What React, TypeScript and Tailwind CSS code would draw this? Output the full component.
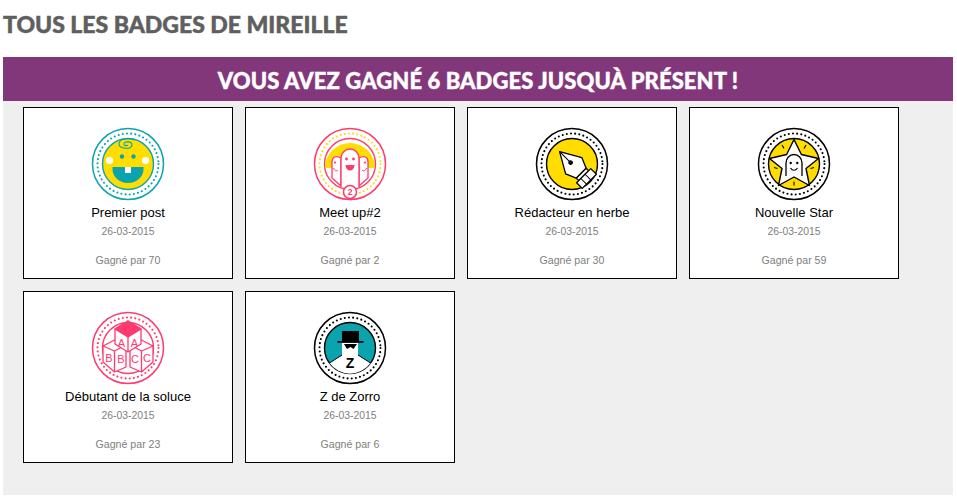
import React from "react";

const TEAL = "#0ba3ad";
const PINK = "#ff3a6e";
const YEL = "#ffdd00";

function Ring({ stroke, dot, inner, children }: { stroke: string; dot: string; inner: string; children?: React.ReactNode }) {
  return (
    <svg width="74" height="74" viewBox="-37 -37 74 74" className="block">
      <circle r="35.5" fill="#fff" stroke={stroke} strokeWidth="1.5" />
      <circle r="30.5" fill="none" stroke={dot} strokeWidth="2.1" strokeLinecap="round" strokeDasharray="0 4.19" />
      <circle r="25.5" fill={inner} stroke={stroke} strokeWidth="1.4" />
      {children}
    </svg>
  );
}

const Baby = () => (
  <Ring stroke={TEAL} dot={TEAL} inner={YEL}>
    <circle cx="-6" cy="-7.5" r="2.2" fill={TEAL} />
    <circle cx="5.5" cy="-7.5" r="2.2" fill={TEAL} />
    <circle cx="-18.5" cy="-3.5" r="3.6" fill="#fff" />
    <circle cx="17.5" cy="-3.5" r="3.6" fill="#fff" />
    <path d="M-15.5 3H15.5V5A15.5 14 0 0 1-15.5 5Z" fill={TEAL} />
    <rect x="-3" y="3" width="6" height="6" fill="#fff" />
    <path d="M6-24C2-26-9-26-9-20C-9-15 4-14 4-19C4-23-4-23-4-20C-4-18-1-18 0-19" fill="none" stroke={TEAL} strokeWidth="1.1" />
  </Ring>
);

const Meet = () => (
  <Ring stroke={PINK} dot={YEL} inner="#fff">
    <path d="M-25 4A25 25 0 0 1 25 4Z" fill={YEL} />
    <path d="M-9-6c-5-3-9-1-9 4V14L-9 22Z M9-6c5-3 9-1 9 4V14L9 22Z" fill="#fff" stroke={PINK} strokeWidth="1.3" strokeLinejoin="round" />
    <circle cx="-15" cy="-1.5" r="1.1" fill={PINK} />
    <circle cx="15" cy="-1.5" r="1.1" fill={PINK} />
    <path d="M-16.5 4c1 3 3 3.5 4.5 2 M16.5 4c-1 3-3 3.5-4.5 2" fill="none" stroke={PINK} strokeWidth="1" />
    <path d="M-9 23V-6a9 9 0 0 1 18 0V23" fill="#fff" stroke={PINK} strokeWidth="1.4" />
    <circle cx="-3.5" cy="-5" r="1.4" fill={PINK} />
    <circle cx="3.5" cy="-5" r="1.4" fill={PINK} />
    <path d="M-4.5 1H4.5A4.5 5.5 0 0 1-4.5 1Z" fill={PINK} />
    <circle cy="28" r="6.5" fill="#fff" stroke={PINK} strokeWidth="1.5" />
    <text y="31" textAnchor="middle" fontSize="8.5" fontWeight="700" fill={PINK} fontFamily="'Liberation Sans', sans-serif">2</text>
  </Ring>
);

const Pen = () => (
  <Ring stroke="#000" dot="#000" inner={YEL}>
    <g transform="rotate(-45)" stroke="#000" strokeWidth="1.3" strokeLinejoin="round">
      <path d="M0-17.5L11.5 2.5 7 13H-7L-11.5 2.5Z" fill="#fff" />
      <path d="M0-17.5V-3" fill="none" strokeWidth="1" />
      <circle cy="-2" r="1.7" fill="#000" />
      <path d="M-7 13H7V16.5H-7Z" fill="#fff" />
      <path d="M-10 16.5H10V24.5H-10Z" fill="#fff" />
      <path d="M-4 16.5V24.5 M2 16.5V24.5" fill="none" strokeWidth="1" />
    </g>
  </Ring>
);

const Star = () => (
  <Ring stroke="#000" dot="#000" inner={YEL}>
    <path d="M0-24.5L7.4-9.5 24.5-5.5 12 4.5 15.5 21.5 0 13-15.5 21.5-12 4.5-24.5-5.5-7.4-9.5Z" fill="#fff" stroke="#000" strokeWidth="1.4" strokeLinejoin="round" />
    <path d="M-8 12V-1a8 8.5 0 0 1 16 0V12" fill="#fff" stroke="#000" strokeWidth="1.3" />
    <circle cx="-3.3" cy="-1" r="1.2" fill="#000" />
    <circle cx="3.3" cy="-1" r="1.2" fill="#000" />
    <path d="M-3.5 4c2 3 5 3 7 0" fill="none" stroke="#000" strokeWidth="1.2" />
    <path d="M-12-19l2 3.5M12-19l-2 3.5M-20 3.5l3.5 1M20 3.5l-3.5 1M0 17.5v4" stroke="#000" strokeWidth="1.1" />
  </Ring>
);

const Letter = ({ x, y, c }: { x: number; y: number; c: string }) => (
  <text x={x} y={y} textAnchor="middle" fontSize="11" fill={PINK} fontFamily="'Liberation Sans', sans-serif">{c}</text>
);

const Blocks = () => (
  <Ring stroke={PINK} dot={PINK} inner="#fff">
    <g fill="#fff" stroke={PINK} strokeWidth="1.3" strokeLinejoin="round">
      <path d="M-13.5-8L-2-3V19L-13.5 24-25 14V-2Z" />
      <path d="M13.5-8L25-2V14L13.5 24 2 19V-3Z" />
      <path d="M-25-2L-13.5 3V24M-13.5 3L-2-3M25-2L13.5 3V24M13.5 3L2-3" fill="none" />
      <path d="M0-27L13-19V-4L0 4-13-4V-19Z" />
      <path d="M-13-19L0-11 13-19 0-27Z" fill={PINK} />
      <path d="M0-11V4" fill="none" />
    </g>
    <Letter x={-6.5} y={-1.5} c="A" />
    <Letter x={6.5} y={-1.5} c="A" />
    <Letter x={-19} y={14} c="B" />
    <Letter x={-7} y={15} c="B" />
    <Letter x={7} y={15} c="C" />
    <Letter x={19} y={14} c="C" />
  </Ring>
);

const Zorro = () => (
  <Ring stroke="#000" dot="#000" inner={TEAL}>
    <path d="M-20.5 15L-8 7V-5H8V7L20.5 15A25 25 0 0 1-20.5 15Z" fill="#fff" />
    <path d="M-20.5 15L-8 7M20.5 15L8 7" stroke="#000" strokeWidth="1" />
    <rect x="-8" y="-17" width="17" height="10.5" fill="#000" />
    <rect x="-12.5" y="-7" width="26" height="1.8" fill="#000" />
    <path d="M-6-4H7L3.5 1 .5-1-3 1Z" fill="#000" />
    <text y="20" textAnchor="middle" fontSize="14" fontWeight="700" fill="#000" fontFamily="'Liberation Sans', sans-serif">Z</text>
  </Ring>
);

const badges = [
  { title: "Premier post", count: 70, Icon: Baby },
  { title: "Meet up#2", count: 2, Icon: Meet },
  { title: "Rédacteur en herbe", count: 30, Icon: Pen },
  { title: "Nouvelle Star", count: 59, Icon: Star },
  { title: "Débutant de la soluce", count: 23, Icon: Blocks },
  { title: "Z de Zorro", count: 6, Icon: Zorro },
];

export default function App() {
  return (
    <div className="h-[503px] w-[957px] overflow-hidden bg-white font-['Liberation_Sans',sans-serif]">
      <h1 className="h-[57px] pl-[3px] pt-[9px] font-['Lato',sans-serif] text-[23px] font-black leading-[30px] text-[#5f5f5f] [-webkit-text-stroke:0.5px_#5f5f5f]">
        TOUS LES BADGES DE MIREILLE
      </h1>
      <div className="ml-[3px] h-[438px] w-[950px] bg-[#efefef]">
        <div className="h-[44px] bg-[#83377b] text-center font-['Lato',sans-serif] text-[22px] font-black leading-[47px] tracking-[0.1px] text-white [-webkit-text-stroke:0.4px_#ffffff]">
          VOUS AVEZ GAGNÉ 6 BADGES JUSQUÀ PRÉSENT !
        </div>
        <div className="flex flex-wrap gap-[12px] pl-[20px] pt-[6px]">
          {badges.map(({ title, count, Icon }) => (
            <div key={title} className="flex h-[172px] w-[210px] flex-col items-center border border-black bg-white pt-[19px]">
              <Icon />
              <div className="mt-[3px] text-[13px] leading-[18px] text-black">{title}</div>
              <div className="mt-[1px] text-[10.4px] leading-[18px] text-[#808080]">26-03-2015</div>
              <div className="mt-[10px] text-[10.6px] leading-[18px] text-[#808080]">Gagné par {count}</div>
            </div>
          ))}
        </div>
      </div>
    </div>
  );
}
